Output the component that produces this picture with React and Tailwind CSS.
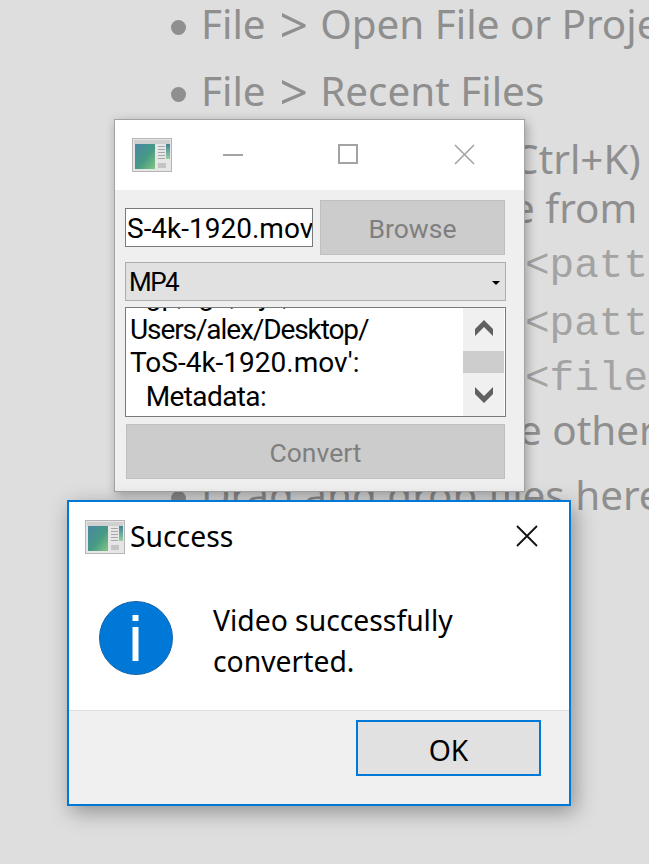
const uiFont = { fontFamily: '"Noto Sans", "Open Sans", sans-serif' };

const AppIcon = ({ className }) => (
  <svg className={className} viewBox="0 0 40 34">
    <defs>
      <linearGradient id="pane" x1="0" y1="0" x2="1" y2="1">
        <stop offset="0" stopColor="#4a86a4" />
        <stop offset="0.55" stopColor="#469a84" />
        <stop offset="1" stopColor="#82c684" />
      </linearGradient>
      <linearGradient id="side" x1="0" y1="0" x2="0" y2="1">
        <stop offset="0" stopColor="#3f8496" />
        <stop offset="1" stopColor="#96cfa0" />
      </linearGradient>
    </defs>
    <rect x="0.5" y="0.5" width="39" height="33" fill="#e6e6e6" stroke="#b5b5b5" />
    <rect x="2" y="2" width="36" height="4" fill="#d0d0d0" />
    <rect x="3" y="6" width="20" height="25" fill="url(#pane)" />
    <rect x="26" y="8" width="7" height="1" fill="#a8a8a8" />
    <rect x="26" y="11" width="7" height="1" fill="#a8a8a8" />
    <rect x="26" y="14" width="7" height="1" fill="#a8a8a8" />
    <rect x="26" y="17" width="7" height="1" fill="#a8a8a8" />
    <rect x="26" y="20" width="7" height="1" fill="#a8a8a8" />
    <rect x="34" y="6" width="4" height="15" fill="url(#side)" />
    <rect x="26" y="25" width="8" height="5" fill="#c4c4c4" />
  </svg>
);

const bgRows = [
  { text: 'Open File or Project', menu: true, bullet: true, cls: 'pl-[171px]' },
  { text: 'Recent Files', menu: true, bullet: true, cls: 'mt-[27px] pl-[171px]' },
  { text: '(Ctrl+K)', cls: 'mt-[28px] pl-[501px]' },
  { text: 'e from a', cls: 'mt-[9px] pl-[512px]' },
  { text: '<patt', mono: true, cls: 'mt-[19px] pl-[525px]' },
  { text: '<patt', mono: true, cls: 'mt-[18px] pl-[525px]' },
  { text: '<file', mono: true, cls: 'mt-[15px] pl-[525px]' },
  { text: 'e other', cls: 'mt-[10px] pl-[519px]' },
  { text: 'Drag and drop files here', bullet: true, cls: 'mt-[25px] pl-[171px]' },
];

function Background() {
  return (
    <div className="absolute inset-0 overflow-hidden pt-[4px] text-[40.4px] text-[#8f8f8f] whitespace-nowrap" style={uiFont}>
      {bgRows.map((row, i) => (
        <div key={i} className={`flex items-center h-[40px] ${row.cls}`}>
          {row.bullet && <span className="shrink-0 mt-[7px] mr-[15px] w-[15px] h-[15px] rounded-full bg-[#8f8f8f]" />}
          {row.menu && <span className="flex items-center mr-[12px]">File<span className="ml-[14px] text-[50px] leading-none">&gt;</span></span>}
          <span className={row.mono ? "font-['Liberation_Mono'] text-[41px] text-[#a3a3a3]" : ''}>{row.text}</span>
        </div>
      ))}
    </div>
  );
}

function MainWindow() {
  return (
    <div className="absolute left-[114px] top-[119px] w-[411px] h-[373px] flex flex-col border border-[#a3a3a3] bg-[#efefef] shadow-[2px_3px_10px_rgba(0,0,0,0.3)] font-['Roboto'] text-[28px] text-black">
      <div className="h-[70px] bg-white flex items-center relative shrink-0">
        <AppIcon className="ml-[17px] w-[40px] h-[34px] blur-[0.4px]" />
        <span className="absolute left-[108px] top-[34px] w-[20px] h-[2px] bg-[#a3a3a3]" />
        <span className="absolute left-[223px] top-[24px] w-[20px] h-[20px] border-2 border-[#a3a3a3]" />
        <svg className="absolute left-[339px] top-[24px] w-[21px] h-[21px]" viewBox="0 0 21 21" stroke="#a3a3a3" strokeWidth="1.6" fill="none">
          <path d="M1 1l19 19M20 1L1 20" />
        </svg>
      </div>
      <div className="flex-1 pl-[10px] pr-[18px] pt-[10px]">
        <div className="flex items-center gap-[7px] h-[55px]">
          <div className="w-[188px] h-[39px] border border-[#7a7a7a] bg-white overflow-hidden flex items-center pl-[1px] pt-[2px] whitespace-nowrap">S-4k-1920.mov</div>
          <div className="w-[185px] h-[55px] pt-[2px] border border-[#bfbfbf] bg-[#cccccc] flex items-center justify-center text-[#7f7f7f] text-[26.5px]">Browse</div>
        </div>
        <div className="mt-[7px] w-[381px] h-[39px] pt-[2px] border border-[#adadad] bg-[#e1e1e1] flex items-center justify-between pl-[3px] pr-[5px]">
          <span className="text-[26px] tracking-[-1.5px]">MP4</span>
          <span className="w-0 h-0 border-x-[4px] border-x-transparent border-t-[4px] border-t-black" />
        </div>
        <div className="mt-[6px] w-[381px] h-[110px] border border-[#7a7a7a] bg-white flex overflow-hidden">
          <div className="flex-1 pl-[4px] -mt-[29px] leading-[33.5px] whitespace-pre">
            <div>3gp,3g2,mj2, from '/</div>
            <div className="tracking-[-1.1px]">Users/alex/Desktop/</div>
            <div>ToS-4k-1920.mov':</div>
            <div className="pl-[3px] tracking-[-0.6px]">  Metadata:</div>
          </div>
          <div className="w-[41px] mr-[1px] bg-[#f0f0f0] flex flex-col items-center shrink-0">
            <svg className="mt-[12px] w-[18px] h-[16px] shrink-0" viewBox="0 0 18 16" fill="#606060"><path d="M9 0l9 9v7L9 7l-9 9V9z" /></svg>
            <div className="mt-[15px] w-full h-[22px] shrink-0 bg-[#cdcdcd]" />
            <svg className="mt-[14px] w-[18px] h-[16px] shrink-0" viewBox="0 0 18 16" fill="#606060"><path d="M9 16L0 7V0l9 9 9-9v7z" /></svg>
          </div>
        </div>
        <div className="mt-[7px] ml-[1px] w-[379px] h-[55px] pt-[2px] border border-[#bfbfbf] bg-[#cccccc] flex items-center justify-center text-[#7f7f7f] text-[26.5px]">Convert</div>
      </div>
    </div>
  );
}

function SuccessDialog() {
  return (
    <div className="absolute left-[67px] top-[500px] w-[504px] h-[306px] flex flex-col border-2 border-[#0078d7] bg-white shadow-[4px_6px_20px_rgba(0,0,0,0.35)] text-[28.3px] text-black">
      <div className="h-[68px] flex items-center relative shrink-0">
        <AppIcon className="ml-[16px] mt-[2px] w-[40px] h-[34px] blur-[0.4px]" />
        <span className="ml-[5px]">Success</span>
        <svg className="absolute right-[31px] top-[23px] w-[22px] h-[22px]" viewBox="0 0 22 22" stroke="#111" strokeWidth="1.8" fill="none">
          <path d="M1 1l20 20M21 1L1 21" />
        </svg>
      </div>
      <div className="flex-1 flex pl-[30px] pt-[31px]">
        <svg className="w-[74px] h-[74px] shrink-0" viewBox="0 0 74 74">
          <circle cx="37" cy="37" r="36.5" fill="#0078d7" stroke="#1565a8" />
          <rect x="33.5" y="14" width="6" height="6" fill="#fff" />
          <rect x="33.5" y="26" width="6" height="34" fill="#fff" />
        </svg>
        <div className="ml-[40px] -mt-[1px] leading-[41px]">Video successfully<br />converted.</div>
      </div>
      <div className="h-[94px] bg-[#f0f0f0] border-t border-[#dfdfdf] flex justify-end pt-[9px] pr-[28px] shrink-0">
        <div className="w-[185px] h-[56px] pt-[4px] border-2 border-[#0078d7] bg-[#e1e1e1] flex items-center justify-center">OK</div>
      </div>
    </div>
  );
}

export default function App() {
  return (
    <div className="relative w-[649px] h-[864px] bg-[#dedede] overflow-hidden" style={uiFont}>
      <Background />
      <MainWindow />
      <SuccessDialog />
    </div>
  );
}
